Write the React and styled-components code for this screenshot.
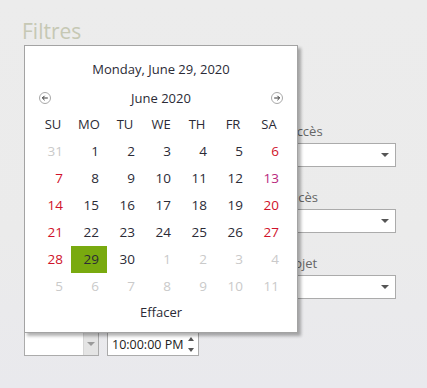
import React from "react";
import styled, { createGlobalStyle } from "styled-components";

const GlobalStyle = createGlobalStyle`
  html, body {
    margin: 0;
    padding: 0;
  }
  body {
    font-family: "Segoe UI", "Open Sans", sans-serif;
    background: linear-gradient(to bottom, #ececec 0%, #ebebeb 60%, #e9e9ed 100%);
    min-height: 388px;
  }
`;

const Page = styled.div`
  width: 427px;
  height: 388px;
  padding: 17px 0 0 22px;
  box-sizing: border-box;
`;

const Title = styled.h1`
  margin: 0;
  font-size: 21px;
  font-weight: 400;
  line-height: 28px;
  color: #c6c8b4;
`;

const FormGrid = styled.div`
  display: grid;
  grid-template-columns: 175px 157px;
  column-gap: 40px;
  margin: 65px 0 0 2px;
`;

const Column = styled.div`
  display: flex;
  flex-direction: column;
  padding-top: ${(p) => p.$offset || 0}px;
`;

const Field = styled.div`
  display: flex;
  flex-direction: column;
  margin-bottom: 18px;
`;

const Label = styled.label`
  font-size: 13px;
  line-height: 24px;
  color: #666;
  white-space: nowrap;
`;

const Controls = styled.div`
  position: relative;
  display: flex;
  gap: 8px;
`;

const Box = styled.div`
  position: relative;
  display: flex;
  align-items: center;
  box-sizing: border-box;
  height: 24px;
  width: ${(p) => p.$width || "100%"};
  background: #fff;
  border: 1px solid #ababab;
  font-size: 12.5px;
  color: #222;
  padding-left: 4px;
`;

const BoxText = styled.span`
  flex: 1;
  white-space: nowrap;
`;

const Caret = styled.span`
  width: 0;
  height: 0;
  margin-right: 6px;
  border-left: 4px solid transparent;
  border-right: 4px solid transparent;
  border-top: 4px solid ${(p) => p.$color || "#555"};
`;

const DropButton = styled.span`
  display: flex;
  align-items: center;
  justify-content: center;
  align-self: stretch;
  width: 14px;
  background: #e4e4e4;
  border-left: 1px solid #d6d6d6;

  ${Caret} {
    margin: 0;
  }
`;

const Spinner = styled.span`
  display: flex;
  flex-direction: column;
  justify-content: space-between;
  height: 15px;
  margin-right: 4px;
`;

const SpinArrow = styled.span`
  width: 0;
  height: 0;
  border-left: 3.5px solid transparent;
  border-right: 3.5px solid transparent;
  ${(p) =>
    p.$up ? "border-bottom: 4px solid #555;" : "border-top: 4px solid #555;"}
`;

const Popup = styled.div`
  position: absolute;
  left: 0;
  bottom: calc(100% - 1px);
  width: 274px;
  box-sizing: border-box;
  background: #fff;
  border: 1px solid #a3a3a3;
  box-shadow: 3px 3px 3px rgba(0, 0, 0, 0.3);
  z-index: 10;
  color: #2b2b36;
`;

const LongDate = styled.div`
  padding-top: 13px;
  font-size: 13px;
  line-height: 20px;
  text-align: center;
`;

const NavRow = styled.div`
  display: flex;
  align-items: center;
  justify-content: space-between;
  height: 38px;
  padding: 0 14px;
  font-size: 13px;
`;

const NavButton = styled.span`
  display: flex;
  width: 12px;
  height: 12px;
`;

const DayGrid = styled.div`
  display: grid;
  grid-template-columns: repeat(7, 36px);
  padding: 0 10px;
`;

const DayName = styled.div`
  font-size: 13px;
  line-height: 14px;
  padding-bottom: 7px;
  text-align: center;
`;

const Day = styled.div`
  height: 27px;
  line-height: 27px;
  font-size: 13.5px;
  text-align: right;
  padding-right: 8px;
  color: ${(p) =>
    p.$other ? "#cacaca" : p.$weekend ? p.$tint || "#d0122a" : "#2b2b36"};
  background: ${(p) => (p.$selected ? "#79aa0f" : "transparent")};
`;

const Footer = styled.div`
  height: 24px;
  line-height: 24px;
  margin-bottom: 8px;
  font-size: 13px;
  text-align: center;
`;

const Arrow = ({ dir }) => (
  <svg width="12" height="12" viewBox="0 0 12 12">
    <circle cx="6" cy="6" r="5.5" fill="#fff" stroke="#a8a8a8" />
    {dir === "left" ? (
      <path d="M8.8 6H3.4M5.6 3.8L3.4 6l2.2 2.2" fill="none" stroke="#333" strokeWidth="1" />
    ) : (
      <path d="M3.2 6h5.4M6.4 3.8L8.6 6 6.4 8.2" fill="none" stroke="#333" strokeWidth="1" />
    )}
  </svg>
);

const dayNames = ["SU", "MO", "TU", "WE", "TH", "FR", "SA"];

const weeks = [
  [31, 1, 2, 3, 4, 5, 6],
  [7, 8, 9, 10, 11, 12, 13],
  [14, 15, 16, 17, 18, 19, 20],
  [21, 22, 23, 24, 25, 26, 27],
  [28, 29, 30, 1, 2, 3, 4],
  [5, 6, 7, 8, 9, 10, 11],
];

const Calendar = () => (
  <Popup>
    <LongDate>Monday, June 29, 2020</LongDate>
    <NavRow>
      <NavButton>
        <Arrow dir="left" />
      </NavButton>
      <span>June 2020</span>
      <NavButton>
        <Arrow dir="right" />
      </NavButton>
    </NavRow>
    <DayGrid>
      {dayNames.map((d) => (
        <DayName key={d}>{d}</DayName>
      ))}
      {weeks.map((week, w) =>
        week.map((n, i) => {
          const other = (w === 0 && n > 20) || (w >= 4 && n < 20);
          return (
            <Day
              key={`${w}-${i}`}
              $other={other}
              $weekend={i === 0 || i === 6}
              $tint={n === 13 ? "#b8287c" : undefined}
              $selected={w === 4 && n === 29}
            >
              {n}
            </Day>
          );
        })
      )}
    </DayGrid>
    <Footer>Effacer</Footer>
  </Popup>
);

const DateTime = ({ withCalendar }) => (
  <Controls>
    {withCalendar && <Calendar />}
    <Box $width="75px">
      <BoxText />
      <DropButton>
        <Caret $color="#9a9a9a" />
      </DropButton>
    </Box>
    <Box $width="92px">
      <BoxText>10:00:00 PM</BoxText>
      <Spinner>
        <SpinArrow $up />
        <SpinArrow />
      </Spinner>
    </Box>
  </Controls>
);

const Select = ({ value }) => (
  <Box>
    <BoxText>{value}</BoxText>
    <Caret />
  </Box>
);

export default function App() {
  return (
    <>
      <GlobalStyle />
      <Page>
        <Title>Filtres</Title>
        <FormGrid>
          <Column>
            <Field>
              <Label>Date de début</Label>
              <DateTime />
            </Field>
            <Field>
              <Label>Utilisateur</Label>
              <Select value="" />
            </Field>
            <Field>
              <Label>Porte</Label>
              <Select value="" />
            </Field>
            <Field>
              <Label>Date de fin</Label>
              <DateTime withCalendar />
            </Field>
          </Column>
          <Column $offset={9}>
            <Field>
              <Label>Statut d'accès</Label>
              <Select value="Refusé" />
            </Field>
            <Field>
              <Label>Point d'accès</Label>
              <Select value="" />
            </Field>
            <Field>
              <Label>Lot du projet</Label>
              <Select value="" />
            </Field>
          </Column>
        </FormGrid>
      </Page>
    </>
  );
}
